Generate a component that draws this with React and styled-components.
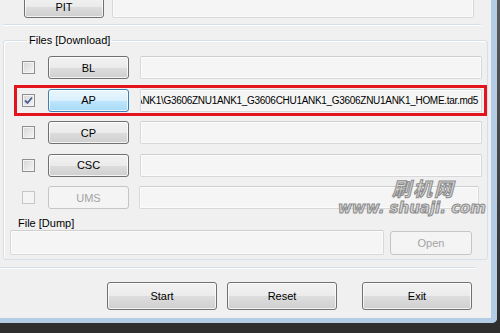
import React from 'react';
import styled, { createGlobalStyle } from 'styled-components';

const GlobalStyle = createGlobalStyle`
    html, body {
        margin: 0;
        padding: 0;
        background: #3c3c3c;
    }
    * { box-sizing: border-box; }
`

const Screen = styled.div`
    width: 500px;
    height: 333px;
    overflow: hidden;
    background: linear-gradient(#5a5a5a, #2e2e2e);
`
const Frame = styled.div`
    width: 497px;
    height: 323px;
    border-right: 6px solid #b4cde6;
    border-bottom: 5px solid #b4cde6;
    border-bottom-right-radius: 5px;
    background: #f0f0f0;
    overflow: hidden;
    font-family: "Liberation Sans", Arial, sans-serif;
    font-size: 11px;
    color: #000;
    display: flex;
    flex-direction: column;
`
const Window = styled.div`
    position: relative;
    flex: 1;
    display: flex;
    flex-direction: column;
`
const TopRow = styled.div`
    display: flex;
    align-items: center;
    gap: 8px;
    margin-top: -5px;
    padding: 0 17px 0 24px;
    height: 23px;
`
const Rule = styled.div`
    height: 2px;
    margin: ${p => p.$margin || '0'};
    border-top: 1px solid #d5dfe5;
    border-bottom: 1px solid #ffffff;
`
const GroupBox = styled.fieldset`
    position: relative;
    margin: 8px 3px 0 3px;
    padding: 10px 5px 4px 18px;
    border: 1px solid #d5dfe5;
    border-radius: 3px;
    box-shadow: inset 1px 1px 0 #fff;
    min-width: 0;
`
const Legend = styled.legend`
    padding: 0 2px;
    margin-left: 5px;
    line-height: 12px;
`
const Rows = styled.div`
    display: flex;
    flex-direction: column;
    gap: 9.5px;
`
const Row = styled.div`
    position: relative;
    display: flex;
    align-items: center;
    height: 23px;
    &::after {
        content: ${p => p.$marked ? "''" : 'none'};
        position: absolute;
        top: -4px;
        bottom: -4px;
        left: -8px;
        right: -5px;
        border: 3px solid #e3141d;
        pointer-events: none;
    }
`
const Check = styled.span`
    width: 13px;
    height: 13px;
    flex: none;
    border: 1px solid ${p => p.$disabled ? '#c6c6c6' : '#8e8f8f'};
    background: ${p => p.$disabled
        ? '#f4f4f4'
        : 'linear-gradient(135deg, #d6d6d6, #f6f6f6)'};
    box-shadow: inset 0 0 0 1px #f4f4f4;
    display: flex;
    align-items: center;
    justify-content: center;
`
const Button = styled.button`
    flex: none;
    width: ${p => p.$w || 81}px;
    height: ${p => p.$h || 23}px;
    margin-left: ${p => p.$ml || 0}px;
    font: inherit;
    color: ${p => p.disabled ? '#a3a3a3' : '#000'};
    border: 1px solid ${p => p.disabled ? '#c5c5c5' : p.$focus ? '#3c7fb1' : '#707070'};
    border-radius: 3px;
    padding: 0;
    background: ${p => p.disabled
        ? '#f4f4f4'
        : p.$focus
            ? 'linear-gradient(#eaf6fd 0%, #d9f0fc 50%, #bee6fd 51%, #a7d9f5 100%)'
            : 'linear-gradient(#f2f2f2 0%, #ebebeb 50%, #dddddd 51%, #cfcfcf 100%)'};
    box-shadow: inset 0 0 0 1px ${p => p.disabled ? '#f4f4f4' : 'rgba(255,255,255,0.75)'};
`
const Field = styled.div`
    flex: 1;
    min-width: 0;
    height: ${p => p.$h || 23}px;
    margin-left: ${p => p.$ml || 0}px;
    margin-right: ${p => p.$mr || 0}px;
    border: 1px solid #d8d8d8;
    border-top-color: #cfcfcf;
    border-radius: 2px;
    background: #f5f5f5;
    box-shadow: inset 0 0 0 1px #fbfbfb;
    padding: 0 3px 0 0;
    display: flex;
    align-items: center;
    justify-content: flex-end;
    white-space: nowrap;
    overflow: hidden;
`
const PathText = styled.span`
    flex: none;
    font-size: 10px;
    letter-spacing: -0.3px;
`
const DumpGroup = styled.div`
    margin-top: 8px;
`
const DumpLabel = styled.div`
    margin-left: -4px;
    line-height: 12px;
`
const DumpRow = styled.div`
    display: flex;
    align-items: center;
    margin: 1px 10px 0 -12px;
    gap: 6px;
`
const Actions = styled.div`
    display: flex;
    justify-content: flex-end;
    padding: 13px 19px 0 0;
`
const Watermark = styled.div`
    position: absolute;
    right: 5px;
    top: 176px;
    display: flex;
    flex-direction: column;
    align-items: flex-end;
    font-style: italic;
    font-weight: bold;
    color: #d7d7d7;
    -webkit-text-stroke: 1px #8c8c8c;
    pointer-events: none;
`
const WmCn = styled.span`
    font-family: "Noto Sans CJK SC", sans-serif;
    font-size: 19px;
    margin-right: 31px;
    letter-spacing: 2px;
    line-height: 23px;
`
const WmUrl = styled.span`
    font-family: "DejaVu Sans", sans-serif;
    font-size: 15px;
    letter-spacing: 0;
    line-height: 19px;
`

const CheckMark = () => (
    <svg width="9" height="9" viewBox="0 0 9 9">
        <path d="M1 4.5 L3.5 7 L8 1.5" fill="none" stroke="#4a5f97" strokeWidth="1.8" />
    </svg>
)

const files = [
    { id: 'BL' },
    { id: 'AP', checked: true, focus: true, path: 'ANK1\\G3606ZNU1ANK1_G3606CHU1ANK1_G3606ZNU1ANK1_HOME.tar.md5' },
    { id: 'CP' },
    { id: 'CSC' },
    { id: 'UMS', disabled: true },
]

const App = () => {
    return (
        <Screen>
            <GlobalStyle />
            <Frame>
                <Window>
                    <TopRow>
                        <Button $w={80}>PIT</Button>
                        <Field />
                    </TopRow>
                    <Rule $margin="6px 10px 0 3px" />
                    <GroupBox>
                        <Legend>Files [Download]</Legend>
                        <Rows>
                            {files.map(f => (
                                <Row key={f.id} $marked={f.checked}>
                                    <Check $disabled={f.disabled}>{f.checked && <CheckMark />}</Check>
                                    <Button $ml={13} $focus={f.focus} disabled={f.disabled}>{f.id}</Button>
                                    <Field $ml={f.disabled ? 10 : 11} $mr={f.disabled ? 3 : 0}>
                                        {f.path && <PathText>{f.path}</PathText>}
                                    </Field>
                                </Row>
                            ))}
                        </Rows>
                        <DumpGroup>
                            <DumpLabel>File [Dump]</DumpLabel>
                            <DumpRow>
                                <Field $h={25} />
                                <Button $w={82} $h={24} disabled>Open</Button>
                            </DumpRow>
                        </DumpGroup>
                    </GroupBox>
                    <Rule $margin="7px 15px 0 0" />
                    <Actions>
                        <Button $w={110} $h={28}>Start</Button>
                        <Button $w={110} $h={28} $ml={10}>Reset</Button>
                        <Button $w={110} $h={28} $ml={25}>Exit</Button>
                    </Actions>
                    <Watermark>
                        <WmCn>刷机网</WmCn>
                        <WmUrl>www. shuaji. com</WmUrl>
                    </Watermark>
                </Window>
            </Frame>
        </Screen>
    )
}

export default App
